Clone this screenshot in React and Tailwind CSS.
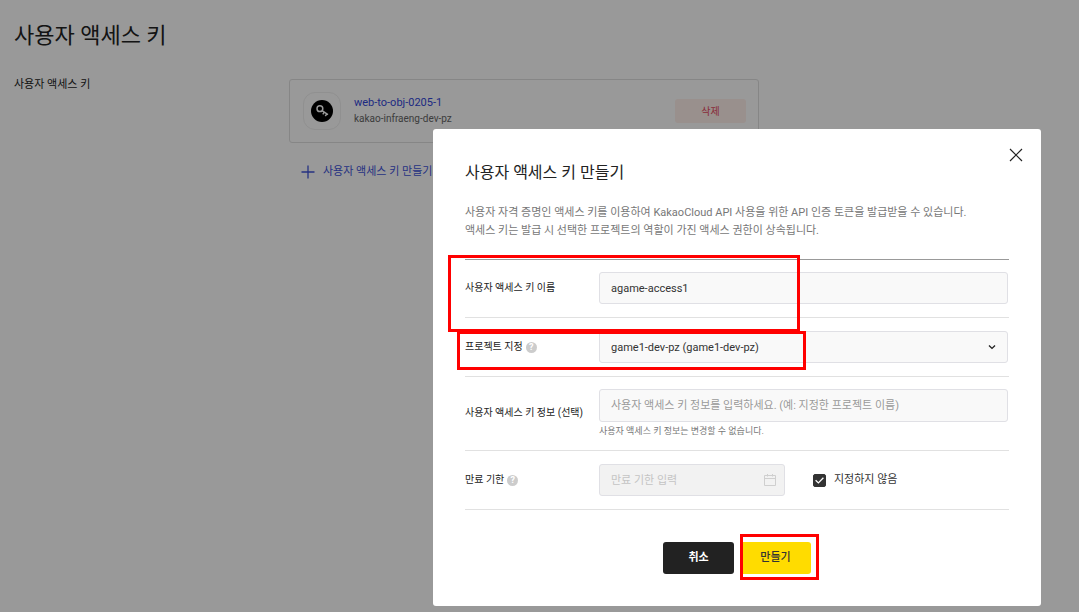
import { useState } from "react";

const fieldClass =
    "block h-8 w-full rounded-[3px] border border-[#e0e0e5] bg-[#f9f9f9] px-[11px] text-[11px] text-[#333] placeholder:text-[#999] outline-none";

const KeyIcon = () => {
    return (
        <svg width="22" height="22" viewBox="0 0 22 22" fill="none" aria-hidden="true">
            <circle cx="11" cy="11" r="11" fill="#000" />
            <circle cx="8.9" cy="8.7" r="2.9" stroke="#fff" strokeWidth="1.5" />
            <path d="M11 10.6 L17 14.6 M13.3 12.2 L11.8 14.4 M15.8 13.8 L14.3 16" stroke="#fff" strokeWidth="1.5" />
        </svg>
    );
};

const PlusIcon = () => {
    return (
        <svg width="14" height="14" viewBox="0 0 14 14" fill="none" stroke="currentColor" strokeWidth="1.3" aria-hidden="true">
            <path d="M7 0.5 V13.5 M0.5 7 H13.5" />
        </svg>
    );
};

const CloseIcon = () => {
    return (
        <svg width="14" height="14" viewBox="0 0 14 14" fill="none" stroke="#222" strokeWidth="1.2" aria-hidden="true">
            <path d="M1 1 L13 13 M13 1 L1 13" />
        </svg>
    );
};

const ChevronIcon = () => {
    return (
        <svg width="8" height="8" viewBox="0 0 8 8" fill="none" stroke="#222" strokeWidth="1.4" aria-hidden="true">
            <path d="M1 2.6 L4 5.4 L7 2.6" />
        </svg>
    );
};

const CalendarIcon = () => {
    return (
        <svg width="12" height="12" viewBox="0 0 12 12" fill="none" stroke="#cfcfcf" aria-hidden="true">
            <path d="M0.5 1.5 H11.5 V11.5 H0.5 Z M1 4.5 H11 M3.5 0 V2.5 M8.5 0 V2.5" />
        </svg>
    );
};

const CheckIcon = () => {
    return (
        <svg width="9" height="7" viewBox="0 0 9 7" fill="none" stroke="#fff" strokeWidth="1.3" aria-hidden="true">
            <path d="M0.6 3.2 L3.4 5.9 L8.4 0.8" />
        </svg>
    );
};

const Help = () => {
    return (
        <span className="flex size-[11px] items-center justify-center rounded-full bg-[#ccc] text-[9px] leading-none font-bold text-white">?</span>
    );
};

const Highlight = ({ className }) => {
    return <div className={"pointer-events-none absolute z-10 border-3 border-[#ff0000] " + className}></div>;
};

const Row = ({ label, htmlFor, help, className = "pt-[13px] pb-[13px]", children }) => {
    return (
        <div className={"relative flex items-center border-b border-[#e1e1e1] pr-px " + className}>
            <div className="flex w-[134px] shrink-0 items-center gap-[3px]">
                <label htmlFor={htmlFor} className="text-[10px] leading-4 text-[#222]">{label}</label>
                {help && <Help />}
            </div>
            {children}
        </div>
    );
};

const KeyPage = () => {
    return (
        <main className="px-[14px] pt-[21px]">
            <h1 className="text-[22px] leading-[30px] text-[#222]">사용자 액세스 키</h1>
            <section className="mt-7 flex">
                <h2 className="w-[275px] shrink-0 text-[11px] leading-3 text-[#222]">사용자 액세스 키</h2>
                <div className="w-full max-w-[470px]">
                    <div className="flex h-16 items-center rounded-[3px] border border-[#e0e0e0] px-3">
                        <div className="ml-px flex size-[38px] items-center justify-center rounded-xl border border-[#f0f0f0]">
                            <KeyIcon />
                        </div>
                        <div className="ml-[13px] flex-1">
                            <a href="#key" className="block text-[11px] leading-4 text-[#3347d9]">web-to-obj-0205-1</a>
                            <p className="text-[10px] leading-4 text-[#666]">kakao-infraeng-dev-pz</p>
                        </div>
                        <button type="button" className="h-6 w-[71px] rounded-[3px] bg-[#fff0eb] text-[10px] text-[#e5485f]">삭제</button>
                    </div>
                    <button type="button" className="mt-5 ml-3 flex items-center gap-2 text-[11px] leading-[18px] text-[#3f54d9]">
                        <PlusIcon />
                        사용자 액세스 키 만들기
                    </button>
                </div>
            </section>
        </main>
    );
};

const CreateKeyModal = () => {
    const [name, setName] = useState("agame-access1");
    const [noExpiry, setNoExpiry] = useState(true);

    return (
        <div className="fixed inset-0 flex items-start justify-end overflow-hidden bg-black/40 pt-[129px] pr-[38px]">
            <div role="dialog" aria-labelledby="modal-title" className="relative w-full max-w-[608px] rounded-[3px] bg-white p-8">
                <button type="button" aria-label="닫기" className="absolute top-[19px] right-[18px]">
                    <CloseIcon />
                </button>
                <h2 id="modal-title" className="text-[16px] leading-6 text-[#222]">사용자 액세스 키 만들기</h2>
                <p className="mt-[19px] text-[11px] leading-[18px] text-[#777]">
                    사용자 자격 증명인 액세스 키를 이용하여 KakaoCloud API 사용을 위한 API 인증 토큰을 발급받을 수 있습니다.
                    <br />
                    액세스 키는 발급 시 선택한 프로젝트의 역할이 가진 액세스 권한이 상속됩니다.
                </p>

                <form className="mt-[19px] border-t border-[#999]">
                    <Row label="사용자 액세스 키 이름" htmlFor="key-name" className="pt-3 pb-[13px]">
                        <input id="key-name" type="text" value={name} onChange={(e) => setName(e.target.value)} className={fieldClass} />
                        <Highlight className="-top-[5px] -left-[17px] h-[77px] w-[352px]" />
                    </Row>
                    <Row label="프로젝트 지정" htmlFor="project" help>
                        <div className="relative w-full">
                            <select id="project" className={fieldClass + " appearance-none pt-[2px]"}>
                                <option>game1-dev-pz (game1-dev-pz)</option>
                            </select>
                            <div className="pointer-events-none absolute inset-y-0 right-3 flex items-center">
                                <ChevronIcon />
                            </div>
                        </div>
                        <Highlight className="top-[13px] -left-2 h-[39px] w-[349px]" />
                    </Row>
                    <Row label="사용자 액세스 키 정보 (선택)" htmlFor="key-info" className="pt-3 pb-[13px]">
                        <div className="w-full">
                            <input id="key-info" type="text" placeholder="사용자 액세스 키 정보를 입력하세요. (예: 지정한 프로젝트 이름)" className={fieldClass + " min-h-[33px]"} />
                            <p className="mt-[3px] text-[9px] leading-3 text-[#777]">사용자 액세스 키 정보는 변경할 수 없습니다.</p>
                        </div>
                    </Row>
                    <Row label="만료 기한" htmlFor="expiry" help>
                        <div className="relative w-[186px]">
                            <input
                                id="expiry"
                                type="text"
                                disabled={noExpiry}
                                placeholder="만료 기한 입력"
                                className={fieldClass + " disabled:bg-[#f2f2f2] disabled:placeholder:text-[#c4c4c4]"}
                            />
                            <div className="pointer-events-none absolute inset-y-0 right-[9px] flex items-center">
                                <CalendarIcon />
                            </div>
                        </div>
                        <label className="ml-7 flex items-center gap-2 text-[11px] leading-[18px] text-[#333]">
                            <span className="relative flex size-[13px] items-center justify-center">
                                <input
                                    type="checkbox"
                                    checked={noExpiry}
                                    onChange={(e) => setNoExpiry(e.target.checked)}
                                    className="absolute inset-0 size-[13px] appearance-none rounded-xs border border-[#333] checked:bg-[#333]"
                                />
                                <span className="pointer-events-none relative">
                                    <CheckIcon />
                                </span>
                            </span>
                            지정하지 않음
                        </label>
                    </Row>
                    <div className="mt-8 flex justify-center gap-[6px]">
                        <button type="button" className="h-8 w-[71px] rounded-[3px] bg-[#222] text-[11px] font-bold text-white">취소</button>
                        <div className="relative">
                            <button type="submit" className="h-8 w-[71px] rounded-[3px] bg-[#ffdc00] text-[11px] font-medium text-[#333]">만들기</button>
                            <Highlight className="-top-2 left-0 h-[46px] w-[79px]" />
                        </div>
                    </div>
                </form>
            </div>
        </div>
    );
};

const App = () => {
    return (
        <div className="min-h-screen bg-white font-[Roboto,'Noto_Sans_CJK_KR',sans-serif]">
            <KeyPage />
            <CreateKeyModal />
        </div>
    );
};

export default App;
